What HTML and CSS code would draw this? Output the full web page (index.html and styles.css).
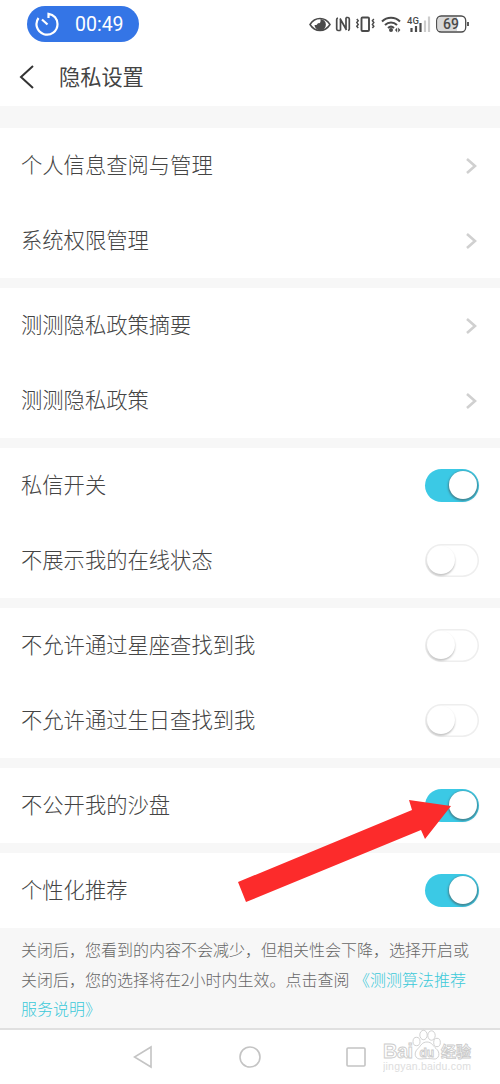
FILE: index.html
```html
<!DOCTYPE html>
<html lang="zh-CN">
<head>
    <meta charset="UTF-8">
    <meta name="viewport" content="width=device-width, initial-scale=1.0">
    <title>隐私设置</title>
    <link rel="stylesheet" href="styles.css">
</head>
<body>
    <div class="status-bar">
        <div class="timer">
            <svg width="26" height="26" viewBox="0 0 26 26" fill="none" stroke="#fff" stroke-width="2.2">
                <path d="M14.500 7V2.800C20 3.500 23.500 8 23.500 13A10.500 10.500 0 1 1 4.500 7"/>
                <path d="M8 8.500l5.500 5"/>
            </svg>
            <span>00:49</span>
        </div>
        <svg class="status-icons" width="162" height="24" viewBox="0 0 162 24" fill="none" stroke="#4a4a4a">
            <!-- eye -->
            <path d="M2 12.500C7 4.500 17 4.500 22 12.500C17 20.500 7 20.500 2 12.500Z" stroke-width="1.500"/>
            <path d="M12.500 7a5.700 5.700 0 1 1-6 6c2.500.5 3-1 3.500-2 1.500 1 3 0 2.500-4z" fill="#4a4a4a" stroke="none"/>
            <!-- nfc -->
            <path d="M32.500 18.500h-2.500a1.500 1.500 0 0 1-1.300-1.500V7.500a1.500 1.500 0 0 1 1.300-1.500M32.500 18.500V7.500M32 6.500l6.500 11.500M38 5.500h2a1.500 1.500 0 0 1 1.300 1.500V17a1.500 1.500 0 0 1-1.300 1.500M38 5.500V17" stroke-width="1.700"/>
            <!-- vibrate -->
            <rect x="53.500" y="5.500" width="7.500" height="13.500" rx="1" stroke-width="1.900"/>
            <path d="M48.800 7l1.400 1.800-1.400 1.800 1.400 1.800-1.400 1.800 1.400 1.800M65.800 7l-1.400 1.800 1.400 1.800-1.400 1.800 1.400 1.800-1.400 1.800" stroke-width="1.500"/>
            <!-- wifi -->
            <path d="M74 9.500c5-5 13-5 18 0M77 13c3.500-3.500 8.500-3.500 12 0M80 16c2-1.800 4-1.800 6 0" stroke-width="2"/>
            <circle cx="83" cy="18" r="2" fill="#4a4a4a" stroke="none"/>
            <path d="M89.200 15.500v5l-2.200-2.500zM90.200 15.500v5l2.200-2.500z" fill="#4a4a4a" stroke="none"/>
            <!-- signal -->
            <path d="M103.500 16v4M108 14v6M112.500 11v9" stroke-width="2.200"/>
            <path d="M117 8.500V20M121 4.500V20" stroke="#ccc" stroke-width="2.200"/>
            <text class="net" x="99" y="12">4G</text>
            <!-- battery -->
            <rect x="128.700" y="4" width="29" height="16" rx="4.500" fill="#fff" stroke-width="1.300"/>
            <path d="M133 5h16v14h-16q-3.300 0-3.300-3.300V8.300Q129.700 5 133 5z" fill="#d8d8d8" stroke="none"/>
            <path d="M160 10v4" stroke-width="1.800"/>
            <text class="level" x="143" y="17.200">69</text>
        </svg>
    </div>

    <div class="header">
        <svg width="16" height="24" viewBox="0 0 16 24" fill="none" stroke="#333" stroke-width="2">
            <path d="M14 1L2 12l12 11"/>
        </svg>
        <h1>隐私设置</h1>
    </div>

    <div class="list">
        <div class="group">
            <div class="row"><span>个人信息查阅与管理</span><svg class="arrow" viewBox="0 0 12 18"><path d="M2 2l8 7-8 7"/></svg></div>
            <div class="row"><span>系统权限管理</span><svg class="arrow" viewBox="0 0 12 18"><path d="M2 2l8 7-8 7"/></svg></div>
        </div>
        <div class="group">
            <div class="row"><span>测测隐私政策摘要</span><svg class="arrow" viewBox="0 0 12 18"><path d="M2 2l8 7-8 7"/></svg></div>
            <div class="row"><span>测测隐私政策</span><svg class="arrow" viewBox="0 0 12 18"><path d="M2 2l8 7-8 7"/></svg></div>
        </div>
        <div class="group">
            <div class="row"><span>私信开关</span><div class="switch on"></div></div>
            <div class="row"><span>不展示我的在线状态</span><div class="switch"></div></div>
        </div>
        <div class="group">
            <div class="row"><span>不允许通过星座查找到我</span><div class="switch"></div></div>
            <div class="row"><span>不允许通过生日查找到我</span><div class="switch"></div></div>
        </div>
        <div class="group">
            <div class="row"><span>不公开我的沙盘</span><div class="switch on"></div></div>
        </div>
        <div class="group">
            <div class="row"><span>个性化推荐</span><div class="switch on"></div></div>
        </div>
    </div>

    <p class="note">关闭后，您看到的内容不会减少，但相关性会下降，选择开启或<br>关闭后，您的选择将在2小时内生效。点击查阅 <a>《测测算法推荐<br>服务说明》</a></p>

    <div class="nav">
        <svg width="20" height="24" viewBox="0 0 20 24"><path d="M18 2v20L1.500 12z"/></svg>
        <svg width="24" height="24" viewBox="0 0 24 24"><circle cx="12" cy="12" r="10"/></svg>
        <svg width="20" height="20" viewBox="0 0 20 20"><rect x="1" y="1" width="18" height="18" rx="1"/></svg>
    </div>

    <svg class="pointer" width="214" height="104" viewBox="0 0 214 104">
        <path d="M0 82L174 10 171 0 213 6 187 39 183 30 8 102z"/>
    </svg>

    <svg class="watermark" width="100" height="50" viewBox="0 0 100 50">
        <text class="brand" x="0" y="32" textLength="30">Bai</text>
        <g class="paw">
            <ellipse cx="33.500" cy="15.500" rx="3.500" ry="4.200"/>
            <ellipse cx="40.500" cy="9" rx="3.700" ry="4.700"/>
            <ellipse cx="48.500" cy="9.500" rx="3.700" ry="4.700"/>
            <ellipse cx="54" cy="16.500" rx="3.300" ry="4.200"/>
            <path d="M44 16c5 0 6 4 9 6.500 5 4 3 11-2 10.500-4-.6-9-.6-13 0-6 .5-8-6-3-10.500 3-3 4-6.500 9-6.500z"/>
        </g>
        <text class="du" x="36.500" y="30.500">du</text>
        <text class="cn" x="58" y="31">经验</text>
        <text class="site" x="0" y="44" textLength="88">jingyan.baidu.com</text>
    </svg>
</body>
</html>
```
FILE: styles.css
```css
* {
    box-sizing: border-box;
}

body {
    position: relative;
    width: 500px;
    height: 1084px;
    margin: 0;
    overflow: hidden;
    background-color: #fff;
    color: #444;
    font-family: "Noto Sans CJK SC", sans-serif;
    font-weight: 300;
}

.status-bar {
    display: flex;
    align-items: center;
    justify-content: space-between;
    height: 48px;
    padding: 0 30px 0 27px;
}

.timer {
    display: flex;
    align-items: center;
    gap: 15px;
    width: 112px;
    height: 36px;
    padding-left: 7px;
    border-radius: 18px;
    background-color: #3475e6;
    color: #fff;
    font-family: Roboto, sans-serif;
    font-size: 19.5px;
    font-weight: 400;
}

.status-icons text {
    fill: #4a4a4a;
    stroke: none;
    font-family: Roboto, sans-serif;
    font-weight: 500;
}

.status-icons .net {
    font-size: 9.5px;
}

.status-icons .level {
    font-size: 14px;
    text-anchor: middle;
}

.header {
    display: flex;
    align-items: center;
    gap: 24px;
    height: 58px;
    padding-left: 19px;
}

.header h1 {
    margin: -3px 0 0;
    font-size: 21.2px;
    font-weight: 400;
    line-height: 30px;
}

/* grey strips show through between the groups */
.list {
    display: flex;
    flex-direction: column;
    gap: 10px;
    padding-top: 22px;
    background-color: #f7f7f7;
}

.group {
    background-color: #fff;
}

.row {
    display: flex;
    align-items: center;
    justify-content: space-between;
    height: 75px;
    padding: 0 21px;
    font-size: 21.3px;
}

.row span {
    line-height: 30px;
    margin-top: -4px;
}

.arrow {
    width: 12px;
    height: 18px;
    margin-right: 2px;
    fill: none;
    stroke: #d0d0d0;
    stroke-width: 2.6;
}

.switch {
    width: 54px;
    height: 33px;
    padding: 2px;
    border-radius: 17px;
    background-color: #fff;
    box-shadow: inset 0 0 0 1.5px #eee;
}

.switch::before {
    content: "";
    display: block;
    width: 28px;
    height: 28px;
    border-radius: 50%;
    background-color: #fff;
    box-shadow: 0 1.5px 2px rgba(0, 0, 0, 0.25);
}

.switch.on {
    background-color: #3bc9e5;
    box-shadow: none;
}

.switch.on::before {
    margin-left: 22px;
    box-shadow: 0 1px 2px 1px rgba(70, 90, 95, 0.6);
}

.note {
    height: 102px;
    margin: 0;
    padding: 7px 21px 0;
    border-bottom: 2px solid #e0e0e0;
    background-color: #f7f7f7;
    color: #666;
    font-size: 16px;
    line-height: 29.5px;
    white-space: nowrap;
}

.note a {
    margin-left: 1px;
    color: #3bc9d9;
}

.nav {
    display: flex;
    align-items: center;
    justify-content: space-between;
    height: 54px;
    padding: 0 134px 0 133px;
}

.nav svg {
    fill: none;
    stroke: #c4c4c4;
    stroke-width: 1.6;
}

.pointer {
    position: absolute;
    left: 238px;
    top: 800px;
    fill: #fc2b2b;
}

/* logo floats over the navigation bar */
.watermark {
    position: absolute;
    left: 383px;
    top: 1026px;
    fill: #fff;
    stroke: #ccc;
    stroke-width: 0.9;
    font-family: "Liberation Sans", sans-serif;
}

.watermark .brand {
    font-size: 20px;
    font-weight: bold;
}

.watermark .du {
    font-size: 12px;
    font-weight: bold;
}

.watermark .cn {
    font-family: "Noto Sans CJK SC", sans-serif;
    font-size: 15px;
    font-weight: bold;
}

.watermark .site {
    fill: #ddd;
    stroke: none;
    font-size: 10.5px;
}
```
